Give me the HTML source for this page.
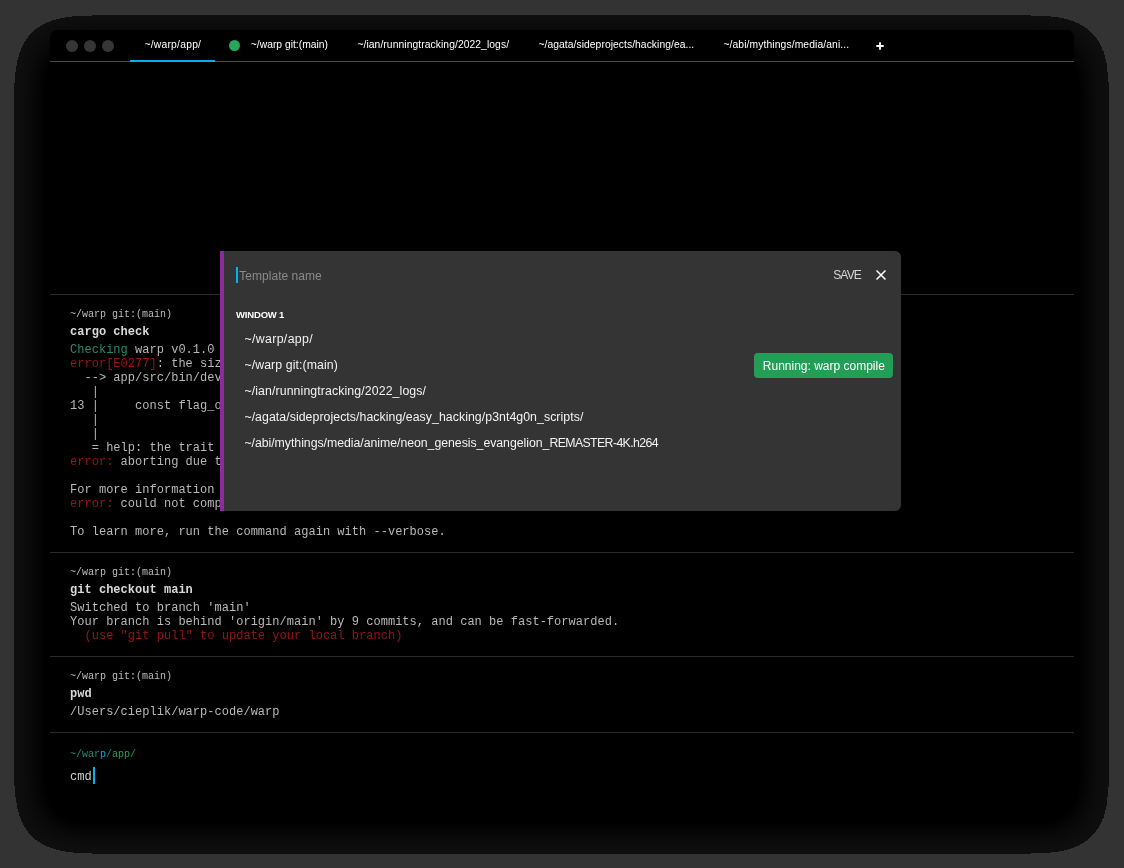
<!DOCTYPE html>
<html>
<head>
<meta charset="utf-8">
<title>Warp</title>
<style>
*{margin:0;padding:0;box-sizing:border-box;}
html,body{width:1124px;height:868px;overflow:hidden;background:#333333;}
body{position:relative;font-family:"Liberation Sans",sans-serif;color:#fff;}
.abs{position:absolute;white-space:pre;}
#shadow{position:absolute;left:14.5px;top:14.7px;width:1094.5px;height:838.8px;border-radius:58px;background:#0e0e0e;overflow:hidden;}
#shadow .core{position:absolute;left:35.5px;top:15.3px;width:1024px;height:768px;background:#000;box-shadow:0 8px 26px 12px #000;}
#win{position:absolute;left:50px;top:30px;width:1024px;height:768px;background:#000;border-radius:7px;overflow:hidden;}
.hr{position:absolute;left:0;width:1024px;height:1px;background:#2b2b2b;}
.dot{position:absolute;width:12px;height:12px;border-radius:50%;background:#363636;top:10px;}
.tab{position:absolute;top:8px;font-size:10.3px;line-height:14px;color:#fff;white-space:pre;}
.mono{font-family:"Liberation Mono",monospace;}
.t{position:absolute;left:20px;font-family:"Liberation Mono",monospace;font-size:12px;line-height:14px;letter-spacing:0.024px;color:#b8b8b8;white-space:pre;}
.p{position:absolute;left:20px;font-family:"Liberation Mono",monospace;font-size:10px;line-height:12px;color:#bdbdbd;white-space:pre;}
.c{position:absolute;left:20px;font-family:"Liberation Mono",monospace;font-size:12px;line-height:14px;letter-spacing:0.024px;color:#d8d8d8;font-weight:bold;white-space:pre;}
.r{color:#9a1616;}
.g{color:#2a8a70;}
#modal{position:absolute;left:220px;top:251px;width:681px;height:260px;background:#343434;border-left:4px solid #8a2c9c;border-radius:0 6px 6px 0;}
.mi{position:absolute;left:244.4px;font-size:12.3px;line-height:16px;color:#f2f2f2;white-space:pre;}
</style>
</head>
<body>
<div id="layer" style="position:absolute;left:0;top:0;width:1124px;height:868px;will-change:transform;">
<svg class="abs" style="left:0;top:0" width="1124" height="868">
<defs>
<filter id="sh" filterUnits="userSpaceOnUse" x="0" y="0" width="1124" height="868" color-interpolation-filters="sRGB">
  <feGaussianBlur in="SourceAlpha" stdDeviation="20" result="b"/>
  <feComponentTransfer in="b" result="mask"><feFuncA type="linear" slope="400" intercept="-13.1"/></feComponentTransfer>
  <feFlood flood-color="#101010" result="fl"/>
  <feComposite in="fl" in2="mask" operator="in" result="base"/>
  <feComponentTransfer in="b" result="dk"><feFuncA type="linear" slope="2.4" intercept="0"/></feComponentTransfer>
  <feComposite in="dk" in2="mask" operator="in" result="dark"/>
  <feMerge><feMergeNode in="base"/><feMergeNode in="dark"/></feMerge>
</filter>
</defs>
<rect x="49.5" y="50.5" width="1024.5" height="768" rx="6" fill="#000" filter="url(#sh)"/>
</svg>
<div id="win">
  <!-- tab bar -->
  <div class="dot" style="left:16px"></div>
  <div class="dot" style="left:34px"></div>
  <div class="dot" style="left:52px"></div>
  <div class="hr" style="top:31px;background:#4a4a4a"></div>
  <div class="abs" style="left:80px;top:30px;width:85px;height:2px;background:#00aeef"></div>
  <div class="tab" id="tab1" style="letter-spacing:0.249px;left:94.4px">~/warp/app/</div>
  <div class="abs" style="left:179px;top:9.5px;width:11px;height:11px;border-radius:50%;background:#26a65b"></div>
  <div class="tab" id="tab2" style="letter-spacing:0.014px;left:200.8px">~/warp git:(main)</div>
  <div class="tab" id="tab3" style="letter-spacing:0.08px;left:307.4px">~/ian/runningtracking/2022_logs/</div>
  <div class="tab" id="tab4" style="letter-spacing:0.061px;left:488.5px">~/agata/sideprojects/hacking/ea...</div>
  <div class="tab" id="tab5" style="letter-spacing:0.116px;left:673.4px">~/abi/mythings/media/ani...</div>
  <svg class="abs" style="left:825px;top:11px" width="10" height="10" viewBox="0 0 10 10"><path d="M5 1.3v7.4M1.3 5h7.4" stroke="#fff" stroke-width="1.8" fill="none"/></svg>

  <!-- block 1 -->
  <div class="hr" style="top:264px"></div>
  <div class="p" style="top:279px">~/warp git:(main)</div>
  <div class="c" style="top:295px">cargo check</div>
  <div class="t" style="top:313px"><span class="g">Checking</span> warp v0.1.0 (/Users/cieplik/warp-code/warp)
<span class="r">error[E0277]</span>: the size for values of type `str` cannot be known
  --> app/src/bin/dev.rs:13:5
   |
13 |     const flag_overrides: &[str] = &[];
   |
   |
   = help: the trait `Sized` is not implemented for `str`
<span class="r">error:</span> aborting due to previous error

For more information about this error, try `rustc --explain`.
<span class="r">error:</span> could not compile `warp`

To learn more, run the command again with --verbose.</div>

  <!-- block 2 -->
  <div class="hr" style="top:522px"></div>
  <div class="p" style="top:537px">~/warp git:(main)</div>
  <div class="c" style="top:553px">git checkout main</div>
  <div class="t" style="top:571px">Switched to branch 'main'
Your branch is behind 'origin/main' by 9 commits, and can be fast-forwarded.
<span class="r">  (use "git pull" to update your local branch)</span></div>

  <!-- block 3 -->
  <div class="hr" style="top:626px"></div>
  <div class="p" style="top:641px">~/warp git:(main)</div>
  <div class="c" style="top:657px">pwd</div>
  <div class="t" style="top:675px">/Users/cieplik/warp-code/warp</div>

  <!-- input -->
  <div class="hr" style="top:702px"></div>
  <div class="p g" style="top:719px">~/war<span style="color:#00aeef">p</span>/<span style="color:#25a25e">app</span>/</div>
  <div class="t" style="top:740px;color:#d0d0d0">cmd</div>
  <div class="abs" style="left:43px;top:737px;width:2px;height:17px;background:#00b4f0"></div>
</div>

<!-- modal -->
<div id="modal"></div>
<div class="abs" style="left:236px;top:267px;width:2px;height:16px;background:#00b4f0"></div>
<div class="abs" id="tpl" style="letter-spacing:0.029px;left:239.3px;top:268px;font-size:12px;line-height:16px;color:#8a8a8a">Template name</div>
<div class="abs" id="save" style="letter-spacing:-0.825px;left:833.2px;top:268px;font-size:12px;line-height:14px;color:#d4d4d4">SAVE</div>
<svg class="abs" style="left:875px;top:269px" width="12" height="12" viewBox="0 0 12 12"><path d="M1.5 1.5l9 9M10.5 1.5l-9 9" stroke="#fff" stroke-width="1.5" fill="none"/></svg>
<div class="abs" id="w1" style="letter-spacing:-0.173px;left:236px;top:309px;font-size:9.5px;line-height:12px;font-weight:bold;color:#fff">WINDOW 1</div>
<div class="mi" id="mi1" style="letter-spacing:0.369px;top:331px">~/warp/app/</div>
<div class="mi" id="mi2" style="letter-spacing:0.092px;top:357px">~/warp git:(main)</div>
<div class="mi" id="mi3" style="letter-spacing:0.113px;top:383px">~/ian/runningtracking/2022_logs/</div>
<div class="mi" id="mi4" style="letter-spacing:0.062px;top:409px">~/agata/sideprojects/hacking/easy_hacking/p3nt4g0n_scripts/</div>
<div class="mi" style="top:435px"><span id="mi5a" style="letter-spacing:-0.032px">~/abi/mythings/media/anime/neon_genesis_evangelion_</span><span id="mi5b" style="letter-spacing:-0.602px">REMASTER-4K.h264</span></div>
<div class="abs" style="left:754px;top:352.5px;width:139px;height:25px;border-radius:4px;background:#229e57"></div>
<div class="abs" id="badge" style="letter-spacing:-0.003px;left:762.8px;top:358px;font-size:12px;line-height:16px;color:#fff">Running: warp compile</div>
</div>
</body>
</html>
